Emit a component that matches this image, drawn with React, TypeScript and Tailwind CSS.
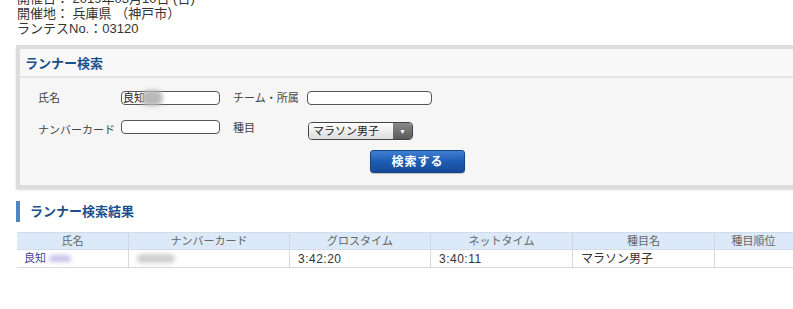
import clsx from 'clsx';

const font = "font-['Liberation_Sans','Noto_Sans_CJK_JP',sans-serif]";

function Blur({ className }: { className?: string }) {
  return <span className={clsx('inline-block rounded-full blur-[2px]', className)} />;
}

function TextInput({ children, className }: { children?: React.ReactNode; className?: string }) {
  return (
    <div
      className={clsx(
        'h-[14px] rounded-[4px] border border-[#555] bg-white flex items-center overflow-hidden text-[11px] text-[#222] pl-[1px]',
        className
      )}
    >
      {children}
    </div>
  );
}

const columns = [
  { label: '氏名', w: 'w-[111px]' },
  { label: 'ナンバーカード', w: 'w-[161px]' },
  { label: 'グロスタイム', w: 'w-[141px]' },
  { label: 'ネットタイム', w: 'w-[142px]' },
  { label: '種目名', w: 'w-[142px]' },
  { label: '種目順位', w: 'w-[78px]' },
];

export default function App() {
  return (
    <div className={clsx('w-[793px] h-[309px] overflow-hidden bg-white relative', font)}>
      {/* event info */}
      <div className="pl-[17px] mt-[-9px] text-[13px] leading-[15px] text-[#333]">
        <div>開催日： 2019年03月10日 (日)</div>
        <div>開催地： 兵庫県 （神戸市）</div>
        <div>ランテスNo.：03120</div>
      </div>

      {/* search panel */}
      <div className="ml-[16px] mt-[9px] w-[820px] border-[4px] border-[#dcdcdc] bg-[#f6f6f6] shadow-[0_1px_2px_rgba(0,0,0,0.15)]">
        <div className="h-[29px] border-b-[2px] border-[#e4e4e4] flex items-center pl-[5px] pt-[2px] bg-[#f8f8f8]">
          <span className="text-[13px] font-bold text-[#1b4f8c]">ランナー検索</span>
        </div>
        <div className="pl-[18px] pt-[13px] pb-[12px] text-[11px] text-[#444]">
          <div className="flex items-center h-[14px]">
            <span className="w-[83px]">氏名</span>
            <TextInput className="w-[99px] overflow-visible">
              <span>良知</span>
              <Blur className="w-[22px] h-[16px] bg-[#b9b9b9] ml-[-4px]" />
            </TextInput>
            <span className="ml-[13px] w-[74px]">チーム・所属</span>
            <TextInput className="w-[125px]" />
          </div>
          <div className="flex items-center h-[20px] mt-[15px]">
            <span className="w-[83px]">ナンバーカード</span>
            <TextInput className="w-[99px] self-start" />
            <span className="ml-[13px] w-[75px] self-start">種目</span>
            <div className="w-[105px] h-[18px] mt-[2px] rounded-[4px] border border-[#444] flex overflow-hidden">
              <div className="flex-1 bg-gradient-to-b from-white to-[#dcdcdc] flex items-center pl-[4px] text-[11px] text-[#222]">
                マラソン男子
              </div>
              <div className="w-[19px] bg-gradient-to-b from-[#8a8a8a] to-[#5a5a5a] flex items-center justify-center">
                <span className="text-white text-[7px] leading-none">▼</span>
              </div>
            </div>
          </div>
          <div className="flex mt-[10px] ml-[332px]">
            <button className="w-[95px] h-[23px] rounded-[3px] bg-gradient-to-b from-[#3f7fd0] via-[#1e5db5] to-[#174a96] border border-[#164585] text-white text-[12px] font-bold tracking-[1px] shadow-[0_1px_1px_rgba(0,0,0,0.2)]">
              検索する
            </button>
          </div>
        </div>
      </div>

      {/* results heading */}
      <div className="ml-[16px] mt-[12px] flex items-center h-[21px]">
        <span className="w-[4px] h-[21px] bg-[#4f86c6]" />
        <span className="ml-[10px] text-[13px] font-bold text-[#1b4f8c]">ランナー検索結果</span>
      </div>

      {/* results table */}
      <div className="ml-[17px] mt-[10px] w-[840px] text-[11px]">
        <div className="flex h-[18px] bg-[#dce9f8] border-t border-b border-[#d2dde9]">
          {columns.map((c, i) => (
            <div
              key={c.label}
              className={clsx(
                c.w,
                'flex items-center justify-center text-[#666]',
                i > 0 && 'border-l border-[#d0d8e2]'
              )}
            >
              {c.label}
            </div>
          ))}
        </div>
        <div className="flex h-[18px] border-b border-[#d8d8d8] text-[#333]">
          <div className="w-[111px] flex items-center pl-[7px] text-[#4a3fa0]">
            良知
            <Blur className="w-[22px] h-[7px] bg-[#c9c4e8] ml-[3px]" />
          </div>
          <div className="w-[161px] border-l border-[#d8d8d8] flex items-center pl-[8px]">
            <Blur className="w-[38px] h-[9px] bg-[#cfcfcf]" />
          </div>
          <div className="w-[141px] border-l border-[#d8d8d8] flex items-center pl-[8px] text-[12px] tracking-[0.5px]">3:42:20</div>
          <div className="w-[142px] border-l border-[#d8d8d8] flex items-center pl-[8px] text-[12px] tracking-[0.5px]">3:40:11</div>
          <div className="w-[142px] border-l border-[#d8d8d8] flex items-center pl-[8px] text-[12px]">マラソン男子</div>
          <div className="w-[78px] border-l border-[#d8d8d8]" />
        </div>
      </div>
    </div>
  );
}
